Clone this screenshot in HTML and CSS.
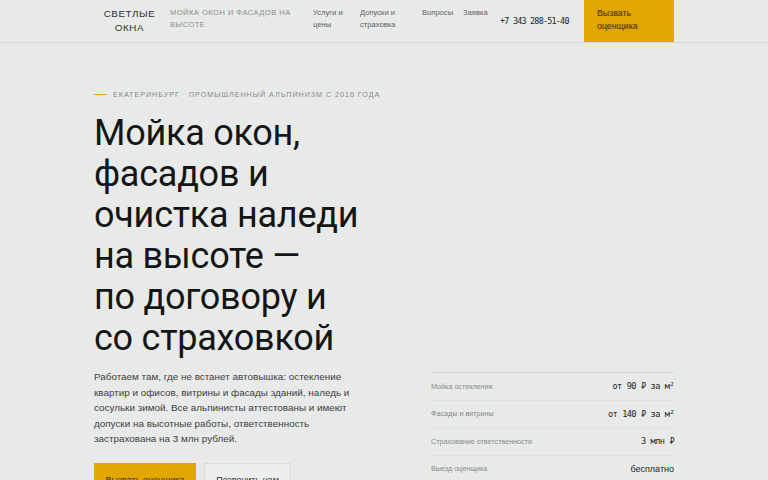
FILE: index.html
```html
<!DOCTYPE html>
<html lang="ru">
<head>
  <meta charset="UTF-8" />
  <meta name="viewport" content="width=device-width, initial-scale=1" />
  <title>Светлые окна — промышленный альпинизм</title>
  <link rel="stylesheet" href="styles.css">
</head>
<body>
  <header class="header">
    <div class="header-inner">
      <a class="logo" href="#">Светлые окна</a>
      <div class="tagline">Мойка окон и фасадов на высоте</div>

      <nav class="nav">
        <a class="nav-link nav-services" href="#">Услуги и цены</a>
        <a class="nav-link nav-permits" href="#">Допуски и страховка</a>
        <a class="nav-link nav-faq" href="#">Вопросы</a>
        <a class="nav-link nav-order" href="#">Заявка</a>
      </nav>

      <a class="phone" href="#">+7 343 288-51-40</a>
      <a class="header-cta" href="#">Вызвать оценщика</a>
    </div>
  </header>

  <main class="hero">
    <p class="eyebrow">Екатеринбург · промышленный альпинизм с 2016 года</p>

    <h1>Мойка окон,<br>фасадов и<br>очистка наледи<br>на высоте —<br>по договору и<br>со страховкой</h1>

    <div class="hero-bottom">
      <div class="hero-text">
        <p class="lead">Работаем там, где не встанет автовышка: остекление квартир и офисов, витрины и фасады зданий, наледь и сосульки зимой. Все альпинисты аттестованы и имеют допуски на высотные работы, ответственность застрахована на 3 млн рублей.</p>

        <div class="actions">
          <a class="btn btn-primary" href="#">Вызвать оценщика</a>
          <a class="btn btn-outline" href="#">Позвонить нам</a>
        </div>
      </div>

      <!-- Prices and guarantees -->
      <ul class="facts">
        <li class="fact">
          <span class="fact-label">Мойка остекления</span>
          <span class="fact-value">от 90 ₽ за м²</span>
        </li>
        <li class="fact">
          <span class="fact-label">Фасады и витрины</span>
          <span class="fact-value">от 140 ₽ за м²</span>
        </li>
        <li class="fact">
          <span class="fact-label">Страхование ответственности</span>
          <span class="fact-value">3 млн ₽</span>
        </li>
        <li class="fact">
          <span class="fact-label">Выезд оценщика</span>
          <span class="fact-value fact-value-text">бесплатно</span>
        </li>
      </ul>
    </div>
  </main>
</body>
</html>
```

FILE: styles.css
```css
/* Reset and base styling */
* {
  box-sizing: border-box;
  margin: 0;
  padding: 0;
}

body {
  font-family: 'Liberation Sans', Arial, sans-serif;
  background: #e8eae9;
  color: #171918;
  overflow: hidden;
}

a {
  color: inherit;
  text-decoration: none;
}

/* Header */
.header {
  border-bottom: 1px solid #d6d9d8;
}

.header-inner {
  width: 580px;
  height: 42px;
  margin: 0 auto;
  display: flex;
  align-items: center;
}

.logo {
  width: 71px;
  text-align: center;
  font-size: 9.8px;
  line-height: 14px;
  letter-spacing: 0.6px;
  text-transform: uppercase;
  color: #2f3231;
  padding-bottom: 1px;
}

.tagline {
  width: 130px;
  margin-left: 5px;
  font-size: 7.5px;
  line-height: 12px;
  letter-spacing: 0.5px;
  text-transform: uppercase;
  color: #8a8d8c;
  padding-bottom: 5px;
}

.nav {
  display: flex;
  align-items: flex-start;
  gap: 12px;
  margin-left: 13px;
  padding-bottom: 4px;
}

.nav-link {
  font-size: 7.6px;
  line-height: 12.5px;
  color: #5d605f;
}

.nav-services { width: 35px; }
.nav-permits { width: 50px; }
.nav-faq { width: 29px; }
.nav-order { width: 25px; }

.phone {
  margin-left: 12px;
  font-family: 'DejaVu Sans Mono', monospace;
  font-size: 8.4px;
  letter-spacing: -0.75px;
  color: #1c1e1d;
}

.header-cta {
  margin-left: auto;
  align-self: stretch;
  width: 90px;
  padding: 7px 13px 0;
  background: #e2a600;
  font-size: 8.8px;
  line-height: 13px;
  color: #3a2a00;
}

/* Hero */
.hero {
  width: 580px;
  margin: 0 auto;
  padding-top: 47px;
}

.eyebrow {
  display: flex;
  align-items: center;
  gap: 6px;
  font-size: 7.2px;
  letter-spacing: 0.95px;
  text-transform: uppercase;
  color: #858887;
}

.eyebrow::before {
  content: "";
  width: 13px;
  height: 1px;
  background: #e2a600;
}

h1 {
  margin-top: 14px;
  font-family: Roboto, 'Liberation Sans', sans-serif;
  font-size: 36px;
  font-weight: 400;
  line-height: 41px;
  letter-spacing: -0.25px;
  color: #141615;
}

.hero-bottom {
  display: flex;
  justify-content: space-between;
  align-items: flex-start;
  margin-top: 10px;
}

.hero-text {
  width: 262px;
}

.lead {
  font-size: 9.9px;
  line-height: 15.6px;
  color: #3b3e3d;
}

.actions {
  display: flex;
  gap: 8px;
  margin-top: 16px;
}

.btn {
  display: inline-block;
  height: 34px;
  font-size: 9px;
  line-height: 32px;
  text-align: center;
  white-space: nowrap;
  border: 1px solid transparent;
}

.btn-primary {
  width: 102px;
  background: #e2a600;
  color: #3a2a00;
}

.btn-outline {
  width: 87px;
  background: #eceeed;
  border-color: #d8dbda;
  color: #2a2c2b;
}

/* Facts table */
.facts {
  list-style: none;
  width: 243px;
  margin-top: 3px;
  border-top: 1px solid #d3d6d5;
}

.fact {
  display: flex;
  justify-content: space-between;
  align-items: center;
  height: 27.5px;
  border-bottom: 1px solid #dfe2e1;
}

.fact-label {
  font-size: 7.2px;
  color: #878a89;
}

.fact-value {
  font-family: 'DejaVu Sans Mono', monospace;
  font-size: 8.6px;
  letter-spacing: -0.6px;
  word-spacing: 0.5px;
  color: #1a1c1b;
}

.fact-value-text {
  font-family: 'Liberation Sans', Arial, sans-serif;
  font-size: 9px;
  letter-spacing: 0;
}
```
